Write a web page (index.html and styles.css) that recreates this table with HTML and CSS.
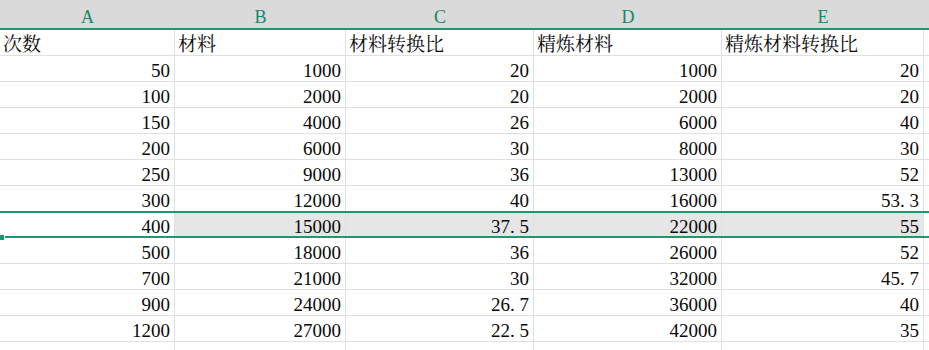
FILE: index.html
```html
<!DOCTYPE html>
<html lang="zh-CN">
<head>
<meta charset="utf-8">
<title>Sheet</title>
<link rel="stylesheet" href="styles.css">
</head>
<body>
<div class="sheet">
  <div class="colhead">
    <div class="ch">A</div><div class="ch">B</div><div class="ch">C</div><div class="ch">D</div><div class="ch">E</div><div class="ch"></div>
  </div>
  <div class="row"><div class="c t">次数</div><div class="c t">材料</div><div class="c t">材料转换比</div><div class="c t">精炼材料</div><div class="c t">精炼材料转换比</div><div class="c"></div></div>
  <div class="row"><div class="c">50</div><div class="c">1000</div><div class="c">20</div><div class="c">1000</div><div class="c">20</div><div class="c"></div></div>
  <div class="row"><div class="c">100</div><div class="c">2000</div><div class="c">20</div><div class="c">2000</div><div class="c">20</div><div class="c"></div></div>
  <div class="row"><div class="c">150</div><div class="c">4000</div><div class="c">26</div><div class="c">6000</div><div class="c">40</div><div class="c"></div></div>
  <div class="row"><div class="c">200</div><div class="c">6000</div><div class="c">30</div><div class="c">8000</div><div class="c">30</div><div class="c"></div></div>
  <div class="row"><div class="c">250</div><div class="c">9000</div><div class="c">36</div><div class="c">13000</div><div class="c">52</div><div class="c"></div></div>
  <div class="row"><div class="c">300</div><div class="c">12000</div><div class="c">40</div><div class="c">16000</div><div class="c">53<span class="dot">.</span>3</div><div class="c"></div></div>
  <div class="row selected"><div class="c">400</div><div class="c sel">15000</div><div class="c sel">37<span class="dot">.</span>5</div><div class="c sel">22000</div><div class="c sel">55</div><div class="c"></div><span class="handle"></span></div>
  <div class="row"><div class="c">500</div><div class="c">18000</div><div class="c">36</div><div class="c">26000</div><div class="c">52</div><div class="c"></div></div>
  <div class="row"><div class="c">700</div><div class="c">21000</div><div class="c">30</div><div class="c">32000</div><div class="c">45<span class="dot">.</span>7</div><div class="c"></div></div>
  <div class="row"><div class="c">900</div><div class="c">24000</div><div class="c">26<span class="dot">.</span>7</div><div class="c">36000</div><div class="c">40</div><div class="c"></div></div>
  <div class="row"><div class="c">1200</div><div class="c">27000</div><div class="c">22<span class="dot">.</span>5</div><div class="c">42000</div><div class="c">35</div><div class="c"></div></div>
  <div class="row last"><div class="c"></div><div class="c"></div><div class="c"></div><div class="c"></div><div class="c"></div><div class="c"></div></div>
</div>
</body>
</html>
```
FILE: styles.css
```css
* { box-sizing: border-box; }
html, body { margin: 0; padding: 0; background: #fff; overflow: hidden; }
body {
  width: 929px;
  height: 350px;
  font-family: "Liberation Serif", "Noto Serif CJK SC", "Noto Sans CJK SC", serif;
  color: #0a0a0a;
}
.sheet { width: 929px; height: 350px; overflow: hidden; }
.colhead, .row {
  display: grid;
  grid-template-columns: 175px 171px 188px 188px 202px 5px;
}
.colhead {
  height: 30px;
  background: #dadada;
  border-bottom: 2px solid #1d9a6c;
}
.ch {
  height: 28px;
  line-height: 28px;
  padding-top: 3px;
  text-align: center;
  font-size: 18px;
  color: #16896a;
}
.row { position: relative; }
.c {
  height: 26px;
  border-right: 1px solid #e0e0e0;
  border-bottom: 1px solid #e0e0e0;
  padding: 5px 4px 0 3px;
  line-height: 20px;
  font-size: 19px;
  text-align: right;
  white-space: nowrap;
  overflow: hidden;
}
.last .c { height: 8px; border-bottom: 0; }
.c.t { text-align: left; }
.c.sel { background: #e6e6e6; }
.dot { letter-spacing: 0.25em; }
.selected::before,
.selected::after {
  content: "";
  position: absolute;
  right: 0;
  height: 2px;
  background: #1d9a6c;
}
.selected::before { top: -1px; left: 0; }
.selected::after { bottom: 0; left: 5px; }
.handle {
  position: absolute;
  left: 0;
  bottom: -2px;
  width: 4px;
  height: 5px;
  background: #1d9a6c;
}
```
